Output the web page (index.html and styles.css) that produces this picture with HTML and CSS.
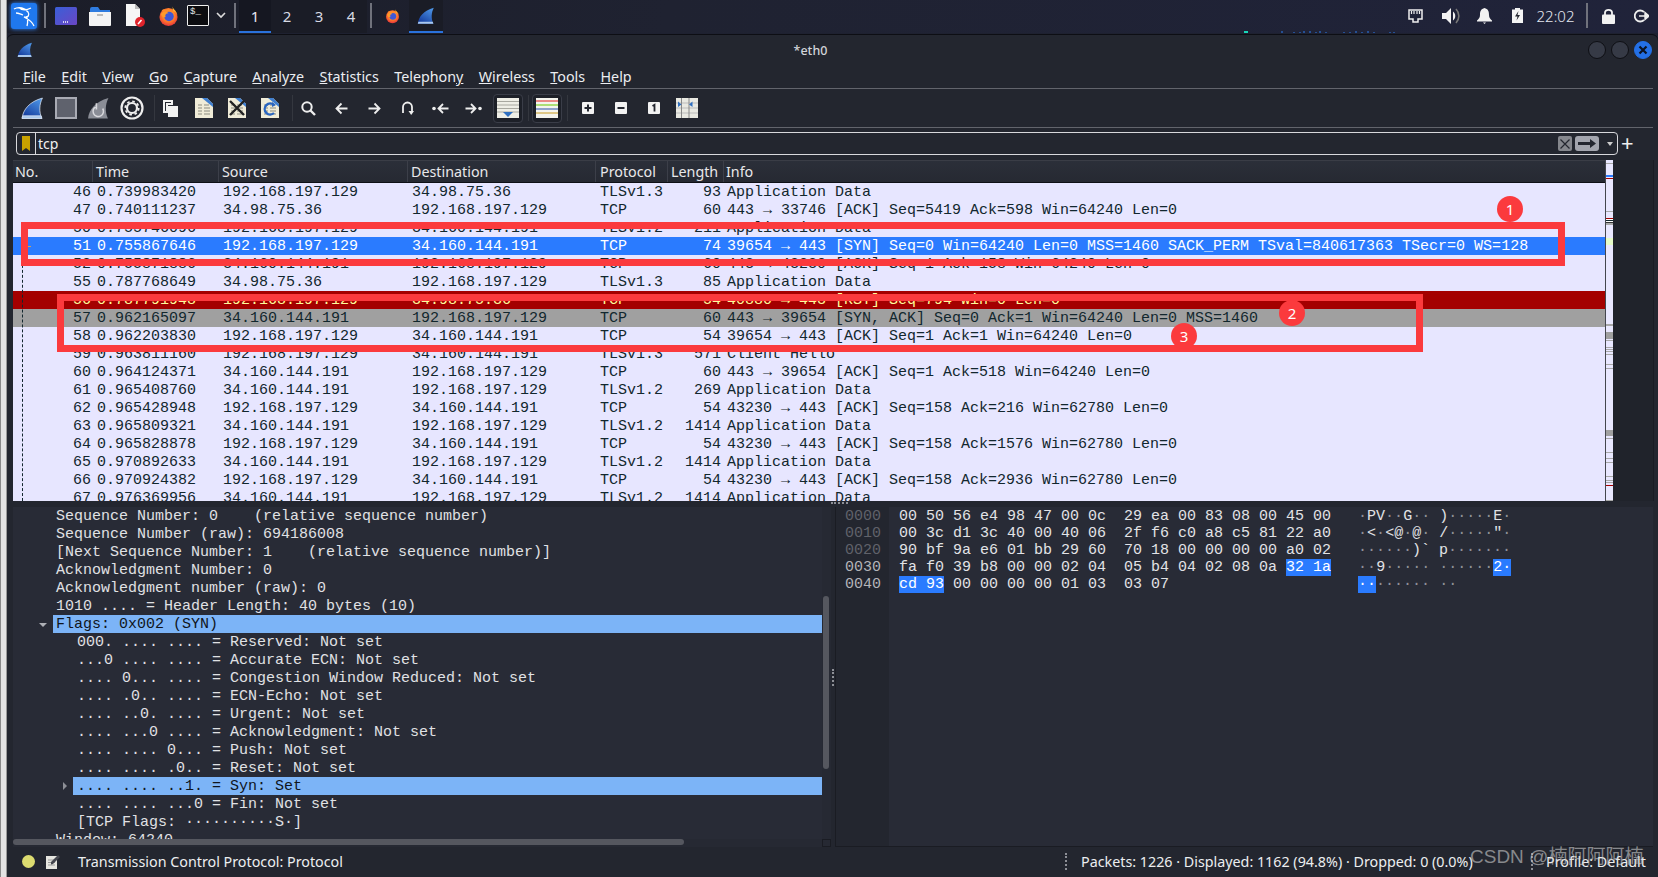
FILE: index.html
```html
<!DOCTYPE html>
<html lang="en">
<head>
<meta charset="utf-8">
<title>eth0 - Wireshark</title>
<link rel="stylesheet" href="styles.css">
</head>
<body>
<svg class="defs" width="0" height="0" aria-hidden="true">
  <defs>
    <linearGradient id="finGrad" x1="0.8" y1="0" x2="0.2" y2="1"><stop offset="0" stop-color="#4d95e6"/><stop offset="1" stop-color="#12389a"/></linearGradient>
    <radialGradient id="foxGrad" cx="0.5" cy="0.4" r="0.65"><stop offset="0" stop-color="#ffcf3d"/><stop offset="0.55" stop-color="#ff7a2a"/><stop offset="1" stop-color="#e0263f"/></radialGradient>
    <linearGradient id="launchGrad" x1="0" y1="0" x2="1" y2="1"><stop offset="0" stop-color="#3a5fd8"/><stop offset="1" stop-color="#6a46c4"/></linearGradient>
    <symbol id="fin" viewBox="0 0 22 22"><path d="M1 20.5C2 12 8 4.500 20.500 1C17.500 7 17 14 20 20.500Z" fill="url(#finGrad)"/><path d="M1 20.500C1.200 19.500 1.400 18.800 1.700 18H19.300L20 20.500Z" fill="#a9c8ee"/></symbol>
    <symbol id="fox" viewBox="0 0 22 22"><circle cx="11" cy="12" r="9.500" fill="url(#foxGrad)"/><path d="M4 5C6 3 8 4 9 6C11 4 14 5 15 7L8 10Z" fill="#ff8a2a"/><path d="M15 1C16 4 20 6 20.500 11C20 8 18 6.500 16 6Z" fill="#ffb52e"/><circle cx="11.500" cy="11.500" r="5" fill="#3f57d6"/><path d="M3 9C5 6 9 6 11 8C8 8 7 10 8 12C6 13 4 12 3 9Z" fill="#ff9a2a"/></symbol>
    <symbol id="page" viewBox="0 0 20 22"><path d="M1 1H13L19 7V21H1Z" fill="#f0ecd8"/><path d="M8 1H13L19 7V10Z" fill="#3f7fd0"/><path d="M4 8H8M10 8H15M4 11H8M10 11H16M4 14H8M10 14H16M4 17H8M10 17H16" stroke="#8b8b80" stroke-width="1.200"/></symbol>
  </defs>
</svg>
<div class="screen">
  <div class="edge"></div>
  <div class="main">
    <header class="panel">
      <div class="slot s34 kali"><svg width="26" height="26" viewBox="0 0 26 26"><rect width="26" height="26" rx="3" fill="#1f78ee"/><path d="M3 6C8 3 14 5 17 9C19 12 17 15 13 14C17 16 21 18 23 23M8 4.500C11 7.500 15 7.500 20 5M15 13.500C17 15.500 17 19 16 23M12 12C9 11 7 10 5 10" stroke="#fff" stroke-width="1.300" fill="none"/></svg></div>
      <div class="slot s8"><i class="vsep"></i></div>
      <div class="slot s34"><svg width="22" height="18" viewBox="0 0 22 18"><rect width="22" height="18" rx="1.500" fill="url(#launchGrad)"/><path d="M8 15H14" stroke="#fff" stroke-dasharray="1 1" stroke-width="1.500"/></svg></div>
      <div class="slot s34"><svg width="22" height="20" viewBox="0 0 22 20"><path d="M1 3Q1 1 3 1H9L11 4H21V8H1Z" fill="#2f7ce0"/><path d="M0 6H22V19Q22 20 21 20H1Q0 20 0 19Z" fill="#f4f4f4"/><path d="M8 9H14" stroke="#aaa" stroke-width="1.500"/></svg></div>
      <div class="slot s35"><svg width="20" height="23" viewBox="0 0 20 23"><path d="M1 0H10L15 5V22H1Z" fill="#f6f6f6"/><path d="M10 0L15 5H10Z" fill="#bbb"/><circle cx="15" cy="18" r="5" fill="#e0242c"/><path d="M13 20L16.500 16" stroke="#fff" stroke-width="1.500"/></svg></div>
      <div class="slot s32"><svg width="21" height="22"><use href="#fox"/></svg></div>
      <div class="slot s28"><span class="term">$_</span></div>
      <div class="slot s18"><svg width="10" height="7" viewBox="0 0 10 7"><path d="M1 1L5 5L9 1" stroke="#ddd" stroke-width="1.600" fill="none"/></svg></div>
      <div class="slot s9"><i class="vsep"></i></div>
      <div class="ws ws-on">1</div><div class="ws">2</div><div class="ws">3</div><div class="ws">4</div>
      <div class="slot s8"><i class="vsep"></i></div>
      <div class="slot s34"><svg width="15" height="16"><use href="#fox"/></svg></div>
      <div class="slot s34 task-on"><svg width="18" height="18"><use href="#fin"/></svg></div>
      <svg class="specks" width="152" height="3" viewBox="0 0 152 3"><rect width="4" height="2" y="1" fill="#18d6b8"/><path d="M38 1V3M50 2V3M56 2V3M60 1V3M66 1V3M72 2V3M76 1V3M82 2V3M100 2V3M106 2V3M112 1V3M118 2V3M124 1V3M130 2V3M146 2V3M150 2V3" stroke="#2b7cf0"/></svg>
      <div class="slot s35"><svg width="15" height="14" viewBox="0 0 15 14"><path d="M1 1H14V10H10V13H5V10H1Z" fill="none" stroke="#eee" stroke-width="1.500"/><path d="M3.500 2V5M6 2V5M9 2V5M11.500 2V5" stroke="#eee" stroke-width="1.200"/></svg></div>
      <div class="slot s35"><svg width="18" height="16" viewBox="0 0 18 16"><path d="M0 5H4L9 0V16L4 11H0Z" fill="#f2f2f2"/><path d="M11 3.500C14 6 14 10 11 12.500V3.500Z" fill="#f2f2f2"/><path d="M14 1C17.800 5 17.800 11 14 15" fill="none" stroke="#777" stroke-width="1.600"/></svg></div>
      <div class="slot s33"><svg width="15" height="16" viewBox="0 0 15 16"><path d="M7.500 0C11 1 12 3 12 7C12 10 13.500 11 15 12.500V13.500H0V12.500C1.500 11 3 10 3 7C3 3 4 1 7.500 0Z" fill="#f2f2f2"/><path d="M6 14.500H9L7.500 16Z" fill="#f2f2f2"/></svg></div>
      <div class="slot s32"><svg width="11" height="15" viewBox="0 0 11 15"><path d="M3 0H8V1.500H11V15H0V1.500H3Z" fill="#f4f4f4"/><path d="M6.500 3L3 8.500H5.500L4.500 12.500L8 7H5.500Z" fill="#23262f"/></svg></div>
      <div class="slot clock">22:02</div>
      <div class="slot s10"><i class="vsep"></i></div>
      <div class="slot s32"><svg width="13" height="16" viewBox="0 0 13 16"><path d="M3 7V4.500C3 1 10 1 10 4.500V7" fill="none" stroke="#f2f2f2" stroke-width="1.800"/><rect y="6.500" width="13" height="9.500" rx="1" fill="#f2f2f2"/></svg></div>
      <div class="slot s34 logout"><svg width="15" height="14" viewBox="0 0 15 14"><path d="M10 3A5.500 5.500 0 1 0 10 11" fill="none" stroke="#eee" stroke-width="1.800"/><path d="M5 7H11M11 3.500V10.500L15 7Z" stroke="#eee" fill="#eee" stroke-width="1.400"/></svg></div>
    </header>

    <div class="window">
      <div class="titlebar">
        <svg class="title-icon" width="16" height="16"><use href="#fin"/></svg>
        <div class="title">*eth0</div>
        <div class="winbtns"><i class="winbtn"></i><i class="winbtn"></i><i class="winbtn win-close"><svg width="10" height="10" viewBox="0 0 10 10"><path d="M1.500 1.500L8.500 8.500M8.500 1.500L1.500 8.500" stroke="#0c1322" stroke-width="2.200"/></svg></i></div>
      </div>
      <nav class="menubar">
        <span><u>F</u>ile</span><span><u>E</u>dit</span><span><u>V</u>iew</span><span><u>G</u>o</span><span><u>C</u>apture</span><span><u>A</u>nalyze</span><span><u>S</u>tatistics</span><span>Telephon<u>y</u></span><span><u>W</u>ireless</span><span><u>T</u>ools</span><span><u>H</u>elp</span>
      </nav>
      <div class="toolbar">
        <div class="tool t33"><svg class="fin-out" width="23" height="23"><use href="#fin"/></svg></div>
        <div class="tool t33"><svg width="22" height="22" viewBox="0 0 22 22"><rect x="1" y="1" width="20" height="20" fill="#5f626d" stroke="#a9abb4" stroke-width="2"/></svg></div>
        <div class="tool t33"><svg width="23" height="23" viewBox="0 0 22 22"><path d="M1 20.500C2 12 8 4.500 20.500 1C17.500 7 17 14 20 20.500Z" fill="#8a8d96"/><path d="M15 11A5 5 0 1 1 9 9M9 6V12" stroke="#d8d8dc" stroke-width="1.500" fill="none"/></svg></div>
        <div class="tool t33"><svg width="24" height="24" viewBox="0 0 24 24"><circle cx="12" cy="12" r="10.500" fill="none" stroke="#eee" stroke-width="2.200"/><circle cx="12" cy="12" r="5" fill="none" stroke="#eee" stroke-width="2.200"/><circle cx="12" cy="12" r="6.700" fill="none" stroke="#eee" stroke-width="1.800" stroke-dasharray="2.600 2.660"/></svg></div>
        <i class="tsep s-a"></i>
        <div class="tool t33"><svg width="15" height="17" viewBox="0 0 15 17"><path d="M1 1H9V4H4V12H1Z" fill="none" stroke="#f2f2f2" stroke-width="2"/><rect x="5" y="6" width="10" height="11" fill="#f2f2f2"/></svg></div>
        <div class="tool t33"><svg width="20" height="22"><use href="#page"/></svg></div>
        <div class="tool t33"><svg width="20" height="22" viewBox="0 0 20 22"><use href="#page" width="20" height="22"/><path d="M3 4L17 18M17 4L3 18" stroke="#222" stroke-width="2.400"/></svg></div>
        <div class="tool t33"><svg width="20" height="22" viewBox="0 0 20 22"><use href="#page" width="20" height="22"/><path d="M14 8A5.500 5.500 0 1 0 14 16" stroke="#2a66c0" stroke-width="2.400" fill="none"/><path d="M12 5L16 8L12 10Z" fill="#2a66c0"/></svg></div>
        <i class="tsep s-b"></i>
        <div class="tool t33"><svg width="15" height="15" viewBox="0 0 15 15"><circle cx="6" cy="6" r="4.700" fill="none" stroke="#eee" stroke-width="2"/><path d="M9.500 9.500L14 14" stroke="#eee" stroke-width="2.400"/></svg></div>
        <div class="tool t33"><svg width="13" height="13" viewBox="0 0 13 13"><path d="M12.500 6.500H2M6.500 1.500L1.500 6.500L6.500 11.500" fill="none" stroke="#eee" stroke-width="1.800"/></svg></div>
        <div class="tool t33"><svg width="13" height="13" viewBox="0 0 13 13"><path d="M.5 6.500H11M6.500 1.500L11.500 6.500L6.500 11.500" fill="none" stroke="#eee" stroke-width="1.800"/></svg></div>
        <div class="tool t33"><svg width="13" height="15" viewBox="0 0 13 15"><path d="M2 12V6A4.500 4.500 0 0 1 11 6V10" fill="none" stroke="#eee" stroke-width="1.800"/><path d="M7.500 10H13L10.200 14Z" fill="#eee"/></svg></div>
        <div class="tool t33"><svg width="17" height="13" viewBox="0 0 17 13"><circle cx="2" cy="6.500" r="1.800" fill="#eee"/><path d="M16.500 6.500H7M11 2L6.500 6.500L11 11" fill="none" stroke="#eee" stroke-width="1.800"/></svg></div>
        <div class="tool t33"><svg width="17" height="13" viewBox="0 0 17 13"><circle cx="15" cy="6.500" r="1.800" fill="#eee"/><path d="M.5 6.500H10M6 2L10.500 6.500L6 11" fill="none" stroke="#eee" stroke-width="1.800"/></svg></div>
        <div class="tool boxed first-box"><svg width="22" height="20" viewBox="0 0 22 20"><rect width="22" height="20" fill="#eeeee6"/><path d="M0 3.500H22M0 7H22M0 10.500H22M0 14H22" stroke="#a8a8a0"/><path d="M6 14H16L11 19Z" fill="#2f6fc0"/></svg></div>
        <i class="tsep s-c"></i>
        <div class="tool boxed"><svg width="22" height="20" viewBox="0 0 22 20"><rect width="22" height="20" fill="#f4f4ee"/><path d="M0 3H22" stroke="#e02020"/><path d="M0 7H22" stroke="#66c800"/><path d="M0 11H22" stroke="#2a4fa8"/><path d="M0 15H22" stroke="#c89a20"/></svg></div>
        <i class="tsep s-d"></i>
        <div class="tool t33 zoom-a"><svg width="12" height="12" viewBox="0 0 12 12"><rect width="12" height="12" rx="1" fill="#f2f2f2"/><path d="M2.500 6H9.500M6 2.500V9.500" stroke="#23262f" stroke-width="2"/></svg></div>
        <div class="tool t33"><svg width="12" height="12" viewBox="0 0 12 12"><rect width="12" height="12" rx="1" fill="#f2f2f2"/><path d="M2.500 6H9.500" stroke="#23262f" stroke-width="2"/></svg></div>
        <div class="tool t33"><svg width="12" height="12" viewBox="0 0 12 12"><rect width="12" height="12" rx="1" fill="#f2f2f2"/><path d="M4.500 4L6.500 2.800V9.500" fill="none" stroke="#23262f" stroke-width="1.800"/></svg></div>
        <div class="tool t33"><svg width="22" height="20" viewBox="0 0 22 20"><rect width="22" height="20" fill="#e9e9e2"/><path d="M0 5H22M0 10H22M0 15H22" stroke="#bbb"/><path d="M5.500 0V20M13 0V20" stroke="#888"/><path d="M2 3.500L5.500 6.500L2 9ZM16.500 3.500L13 6.500L16.500 9Z" fill="#2f6fc0"/></svg></div>
      </div>

      <div class="filter">
        <div class="bookmark"><svg width="8" height="15" viewBox="0 0 8 15"><path d="M0 0H8V15L4 12L0 15Z" fill="#c8a100"/></svg></div>
        <div class="filter-text">tcp</div>
        <div class="clear-btn"><svg width="10" height="10" viewBox="0 0 10 10"><path d="M.5 .5L9.500 9.500M9.500 .5L.5 9.500" stroke="#23262f" stroke-width="1.200"/></svg></div>
        <div class="apply-btn"><svg width="18" height="9" viewBox="0 0 18 9"><path d="M0 3H12V0L18 4.500L12 9V6H0Z" fill="#23262f"/></svg></div>
        <i class="drop"></i>
      </div>
      <div class="filter-plus">+</div>

      <section class="packets">
        <div class="plist">
          <div class="row head"><div>No.</div><div>Time</div><div>Source</div><div>Destination</div><div>Protocol</div><div>Length</div><div>Info</div></div>
          <div class="rows">
            <div class="row"><div>46</div><div>0.739983420</div><div>192.168.197.129</div><div>34.98.75.36</div><div>TLSv1.3</div><div>93</div><div>Application Data</div></div>
            <div class="row"><div>47</div><div>0.740111237</div><div>34.98.75.36</div><div>192.168.197.129</div><div>TCP</div><div>60</div><div>443 → 33746 [ACK] Seq=5419 Ack=598 Win=64240 Len=0</div></div>
            <div class="row"><div>50</div><div>0.755746096</div><div>192.168.197.129</div><div>34.160.144.191</div><div>TLSv1.2</div><div>211</div><div>Application Data</div></div>
            <div class="row sel"><div>51</div><div>0.755867646</div><div>192.168.197.129</div><div>34.160.144.191</div><div>TCP</div><div>74</div><div>39654 → 443 [SYN] Seq=0 Win=64240 Len=0 MSS=1460 SACK_PERM TSval=840617363 TSecr=0 WS=128</div></div>
            <div class="row"><div>52</div><div>0.755871886</div><div>34.160.144.191</div><div>192.168.197.129</div><div>TCP</div><div>60</div><div>443 → 43230 [ACK] Seq=1 Ack=158 Win=64240 Len=0</div></div>
            <div class="row"><div>55</div><div>0.787768649</div><div>34.98.75.36</div><div>192.168.197.129</div><div>TLSv1.3</div><div>85</div><div>Application Data</div></div>
            <div class="row rst"><div>56</div><div>0.787791948</div><div>192.168.197.129</div><div>34.98.75.36</div><div>TCP</div><div>54</div><div>40880 → 443 [RST] Seq=794 Win=0 Len=0</div></div>
            <div class="row syn"><div>57</div><div>0.962165097</div><div>34.160.144.191</div><div>192.168.197.129</div><div>TCP</div><div>60</div><div>443 → 39654 [SYN, ACK] Seq=0 Ack=1 Win=64240 Len=0 MSS=1460</div></div>
            <div class="row"><div>58</div><div>0.962203830</div><div>192.168.197.129</div><div>34.160.144.191</div><div>TCP</div><div>54</div><div>39654 → 443 [ACK] Seq=1 Ack=1 Win=64240 Len=0</div></div>
            <div class="row"><div>59</div><div>0.963811160</div><div>192.168.197.129</div><div>34.160.144.191</div><div>TLSv1.3</div><div>571</div><div>Client Hello</div></div>
            <div class="row"><div>60</div><div>0.964124371</div><div>34.160.144.191</div><div>192.168.197.129</div><div>TCP</div><div>60</div><div>443 → 39654 [ACK] Seq=1 Ack=518 Win=64240 Len=0</div></div>
            <div class="row"><div>61</div><div>0.965408760</div><div>34.160.144.191</div><div>192.168.197.129</div><div>TLSv1.2</div><div>269</div><div>Application Data</div></div>
            <div class="row"><div>62</div><div>0.965428948</div><div>192.168.197.129</div><div>34.160.144.191</div><div>TCP</div><div>54</div><div>43230 → 443 [ACK] Seq=158 Ack=216 Win=62780 Len=0</div></div>
            <div class="row"><div>63</div><div>0.965809321</div><div>34.160.144.191</div><div>192.168.197.129</div><div>TLSv1.2</div><div>1414</div><div>Application Data</div></div>
            <div class="row"><div>64</div><div>0.965828878</div><div>192.168.197.129</div><div>34.160.144.191</div><div>TCP</div><div>54</div><div>43230 → 443 [ACK] Seq=158 Ack=1576 Win=62780 Len=0</div></div>
            <div class="row"><div>65</div><div>0.970892633</div><div>34.160.144.191</div><div>192.168.197.129</div><div>TLSv1.2</div><div>1414</div><div>Application Data</div></div>
            <div class="row"><div>66</div><div>0.970924382</div><div>192.168.197.129</div><div>34.160.144.191</div><div>TCP</div><div>54</div><div>43230 → 443 [ACK] Seq=158 Ack=2936 Win=62780 Len=0</div></div>
            <div class="row"><div>67</div><div>0.976369956</div><div>34.160.144.191</div><div>192.168.197.129</div><div>TLSv1.2</div><div>1414</div><div>Application Data</div></div>
            <i class="rel-line"></i><i class="rel-tick"></i>
            <div class="mark mark-1"></div>
            <div class="mark mark-2"></div>
            <div class="badge badge-1">1</div>
            <div class="badge badge-2">2</div>
            <div class="badge badge-3">3</div>
          </div>
        </div>
        <div class="minimap"></div>
      </section>

      <div class="splitter"><i class="grip"></i></div>

      <section class="panes">
        <div class="details">
          <div class="tree">
            <div class="line"><i class="gut g1"></i><div class="txt p1">Sequence Number: 0    (relative sequence number)</div></div>
            <div class="line"><i class="gut g1"></i><div class="txt p1">Sequence Number (raw): 694186008</div></div>
            <div class="line"><i class="gut g1"></i><div class="txt p1">[Next Sequence Number: 1    (relative sequence number)]</div></div>
            <div class="line"><i class="gut g1"></i><div class="txt p1">Acknowledgment Number: 0</div></div>
            <div class="line"><i class="gut g1"></i><div class="txt p1">Acknowledgment number (raw): 0</div></div>
            <div class="line"><i class="gut g1"></i><div class="txt p1">1010 .... = Header Length: 40 bytes (10)</div></div>
            <div class="line"><i class="gut g1"><b class="tri-down"></b></i><div class="txt p1 hi">Flags: 0x002 (SYN)</div></div>
            <div class="line"><i class="gut g2"></i><div class="txt p2">000. .... .... = Reserved: Not set</div></div>
            <div class="line"><i class="gut g2"></i><div class="txt p2">...0 .... .... = Accurate ECN: Not set</div></div>
            <div class="line"><i class="gut g2"></i><div class="txt p2">.... 0... .... = Congestion Window Reduced: Not set</div></div>
            <div class="line"><i class="gut g2"></i><div class="txt p2">.... .0.. .... = ECN-Echo: Not set</div></div>
            <div class="line"><i class="gut g2"></i><div class="txt p2">.... ..0. .... = Urgent: Not set</div></div>
            <div class="line"><i class="gut g2"></i><div class="txt p2">.... ...0 .... = Acknowledgment: Not set</div></div>
            <div class="line"><i class="gut g2"></i><div class="txt p2">.... .... 0... = Push: Not set</div></div>
            <div class="line"><i class="gut g2"></i><div class="txt p2">.... .... .0.. = Reset: Not set</div></div>
            <div class="line"><i class="gut g2"><b class="tri-right"></b></i><div class="txt p2 hi">.... .... ..1. = Syn: Set</div></div>
            <div class="line"><i class="gut g2"></i><div class="txt p2">.... .... ...0 = Fin: Not set</div></div>
            <div class="line"><i class="gut g2"></i><div class="txt p2">[TCP Flags: ··········S·]</div></div>
            <div class="line"><i class="gut g1"></i><div class="txt p1">Window: 64240</div></div>
          </div>
          <div class="vbar"><i class="vthumb"></i></div>
          <div class="hbar"><i class="hthumb"></i></div>
          <i class="corner"></i>
        </div>
        <div class="vgrip"><i class="vgrip-dots"></i></div>
        <div class="bytes">
          <div class="offsets"><div class="off-dim">0000</div><div class="off-dim">0010</div><div class="off-dim">0020</div><div>0030</div><div>0040</div></div>
          <div class="hexdump"><div>00 50 56 e4 98 47 00 0c  29 ea 00 83 08 00 45 00   <span class="dt">·</span>PV<span class="dt">··</span>G<span class="dt">··</span> )<span class="dt">·····</span>E<span class="dt">·</span></div><div>00 3c d1 3c 40 00 40 06  2f f6 c0 a8 c5 81 22 a0   <span class="dt">·</span>&lt;<span class="dt">·</span>&lt;@<span class="dt">·</span>@<span class="dt">·</span> /<span class="dt">·····</span>"<span class="dt">·</span></div><div>90 bf 9a e6 01 bb 29 60  70 18 00 00 00 00 a0 02   <span class="dt">······</span>)` p<span class="dt">·······</span></div><div>fa f0 39 b8 00 00 02 04  05 b4 04 02 08 0a <span class="hx">32 1a</span>   <span class="dt">··</span>9<span class="dt">·····</span> <span class="dt">······</span><span class="hx">2·</span></div><div><span class="hx">cd 93</span> 00 00 00 00 01 03  03 07                     <span class="hx">··</span><span class="dt">······</span> <span class="dt">··</span></div></div>
        </div>
      </section>

      <footer class="status">
        <i class="led"></i>
        <svg class="note" width="14" height="15" viewBox="0 0 14 15"><path d="M0 2H11V15H0Z" fill="#e6e6e0"/><path d="M2 6H9M2 8.500H9M2 11H9" stroke="#999"/><path d="M5 8L12 1L14 3L7 10L5 10.500Z" fill="#44464e"/></svg>
        <div class="status-msg">Transmission Control Protocol: Protocol</div>
        <i class="sgrip"></i>
        <div class="status-stats">Packets: 1226 · Displayed: 1162 (94.8%) · Dropped: 0 (0.0%)</div>
        <i class="sgrip"></i>
        <div class="status-prof">Profile: Default</div>
        <div class="watermark">CSDN @楠阿阿阿楠</div>
      </footer>
    </div>
  </div>
</div>
</body>
</html>
```
FILE: styles.css
```css
* { box-sizing: border-box; }
html, body { margin: 0; padding: 0; }
body {
  width: 1658px;
  height: 877px;
  overflow: hidden;
  background: #1e2130;
  font-family: "Noto Sans", "Liberation Sans", sans-serif;
  color: #e6e6e6;
}
i, b { display: block; font-style: normal; }
.defs { position: absolute; }
.screen { display: flex; width: 1658px; height: 877px; }
.edge {
  width: 7px;
  flex: none;
  background: #e4e4e4;
  border-left: 1px solid #8a8a8a;
  border-right: 1px solid #9a9a9a;
}
.main { width: 1651px; display: flex; flex-direction: column; }

/* top panel */
.panel {
  height: 33px;
  flex: none;
  display: flex;
  align-items: stretch;
  background: linear-gradient(100deg, #1b1d28 0, #1f2231 40%, #20233a 100%);
  position: relative;
}
.slot { display: flex; align-items: center; justify-content: center; height: 31px; flex: none; }
.s8 { width: 8px; } .s9 { width: 9px; } .s10 { width: 10px; } .s18 { width: 18px; }
.s28 { width: 28px; } .s32 { width: 32px; } .s33 { width: 33px; } .s34 { width: 34px; } .s35 { width: 35px; }
.vsep { width: 2px; height: 25px; background: #70727c; }
.kali svg { filter: drop-shadow(0 0 2px #2f86ff); }
.term {
  width: 22px; height: 21px;
  background: #0c0c10;
  border: 1px solid #eee;
  border-radius: 1px;
  font: 9px/12px "Liberation Mono", monospace;
  color: #eee;
  padding-left: 2px;
}
.ws {
  width: 32px; height: 33px; flex: none;
  font-size: 15px; line-height: 32px; text-align: center;
  color: #d8dae4;
  background: #1a1c26;
}
.ws-on { background: #151721; border-bottom: 2px solid #2a72dc; color: #e6e8f0; }
.task-on { height: 33px; background: #1a1c26; border-bottom: 2px solid #2a72dc; }
.specks { margin: 30px 2px 0 auto; flex: none; }
.clock { width: 49px; padding-right: 4px; font-size: 15px; color: #e4e7f0; font-weight: 300; }

/* window */
.window {
  width: 1651px;
  height: 842px;
  margin-top: 2px;
  background: #23262f;
  border-radius: 6px 6px 0 0;
  padding: 0 5px 0 6px;
  display: flex;
  flex-direction: column;
  position: relative;
  box-shadow: 0 -1px 0 #0d0e14;
}
.titlebar { height: 30px; flex: none; display: flex; align-items: center; margin-left: -1px; padding-left: 6px; }
.title-icon { flex: none; margin-left: -1px; }
.title { flex: 1; text-align: center; font-size: 12.500px; font-weight: 500; color: #d2d4da; }
.winbtns { display: flex; gap: 5px; margin-right: 1px; }
.winbtn { width: 18px; height: 18px; border-radius: 50%; background: #363a46; border: 1px solid #0e0f14; display: flex; align-items: center; justify-content: center; }
.win-close { background: #2470e6; border-color: #2470e6; }

.menubar {
  height: 24px; flex: none;
  display: flex; gap: 15.400px;
  padding-left: 10px;
  font-size: 14.300px; line-height: 24px; color: #eceef2;
  border-bottom: 1px solid #62646c;
}
.toolbar {
  height: 39px; flex: none;
  display: flex; align-items: center;
  padding-left: 3px;
  border-bottom: 1px solid #62646c;
}
.tool { display: flex; align-items: center; justify-content: center; height: 30px; flex: none; }
.t33 { width: 33px; }
.fin-out { stroke: #dfe8f4; stroke-width: .7px; }
.boxed { width: 30px; height: 29px; background: #1d2028; border: 1px solid #3a3d48; border-radius: 4px; }
.first-box { margin-left: 3px; }
.tsep { width: 1px; height: 26px; background: #34373f; flex: none; }
.s-a { margin: 0 0 0 6px; }
.s-b { margin: 0 0 0 6px; }
.s-c { margin: 0 3px 0 5px; }
.s-d { margin: 0 0 0 5px; }
.zoom-a { margin-left: 3px; }
.s-a + .tool { margin-left: -1px; }
.s-b + .tool { margin-left: -1px; }

/* filter */
.filter {
  height: 23px; flex: none;
  width: 1602px;
  margin: 4px 0 0 3px;
  display: flex; align-items: center;
  border: 1px solid #d8d8dc;
  border-radius: 4px;
}
.bookmark { width: 19px; height: 21px; border-right: 1px solid #d8d8dc; display: flex; align-items: center; justify-content: center; }
.filter-text { flex: 1; padding-left: 2px; font-size: 14px; line-height: 21px; color: #f0f0f0; }
.clear-btn { width: 14px; height: 15px; background: #85878d; border-radius: 2px; display: flex; align-items: center; justify-content: center; }
.apply-btn { width: 24px; height: 15px; margin-left: 3px; background: #a3a5ae; border-radius: 3px; display: flex; align-items: center; justify-content: center; }
.drop { width: 0; height: 0; margin: 0 4px 0 8px; border: 3.500px solid transparent; border-top: 4px solid #ccc; border-bottom: 0; }
.filter-plus {
  position: absolute;
  left: 1614px; top: 92px;
  font-size: 22px; line-height: 30px; color: #eee;
}

/* packet list */
.packets {
  height: 341px; flex: none;
  margin-top: 5px;
  display: flex;
  background: #20232b;
  box-shadow: 1px 0 0 #1a1c23;
}
.plist { width: 1592px; flex: none; }
.row {
  display: grid;
  grid-template-columns: 79px 126px 189px 188px 72px 56px 1fr;
  height: 18px;
  font: 15px/20px "Liberation Mono", monospace;
  color: #12272e;
  background: #e7e6ff;
  white-space: pre;
}
.row > div { padding-left: 5px; overflow: hidden; }
.row > div:first-child { text-align: right; padding: 0 1px 0 0; }
.row > div:nth-child(6) { text-align: right; padding: 0 2px 0 0; }
.row > div:nth-child(7) { padding-left: 4px; }
.head {
  height: 23px;
  font: 14.300px/22px "Noto Sans", sans-serif;
  color: #e8e8ea;
  background: linear-gradient(#2b2f39, #262932);
  border-top: 1px solid #3a3d46;
  border-bottom: 1px solid #0e1016;
}
.head > div { border-left: 1px solid #3c3f49; padding-left: 3px; }
.head > div:first-child { text-align: left; padding: 0 0 0 2px; border-left: 0; }
.head > div:nth-child(5) { padding-left: 4px; }
.head > div:nth-child(6) { text-align: left; padding: 0 0 0 3px; }
.head > div:nth-child(7) { padding-left: 2px; }
.sel { background: #2a7bff; color: #fff; }
.rst { background: #a40000; color: #fffc9c; }
.syn { background: #a0a0a0; }
.rows { height: 318px; overflow: hidden; position: relative; }
.rel-line { position: absolute; left: 9px; top: 72px; height: 246px; border-left: 1px dashed #12272e; }
.rel-tick { position: absolute; left: 15px; top: 63px; width: 3px; height: 1px; background: #c9a060; }
.mark { position: absolute; border: 7px solid #fb3a3d; }
.mark-1 { left: 8px; top: 39px; width: 1544px; height: 44px; }
.mark-2 { left: 44px; top: 111px; width: 1366px; height: 58px; }
.badge {
  position: absolute;
  width: 26px; height: 26px; border-radius: 50%;
  background: #fb3a3d; color: #fff;
  font: 15px/26px "Noto Sans", sans-serif;
  text-align: center;
}
.badge-1 { left: 1484px; top: 13px; }
.badge-2 { left: 1266px; top: 117px; }
.badge-3 { left: 1158px; top: 140px; }
.minimap {
  width: 8px; flex: none;
  border-left: 1px solid #44464e;
  background: linear-gradient(#e9e8ff 0 3px, #a8a8a8 3px 4px, #e9e8ff 4px 15px, #2a7bff 15px 17px, #e9e8ff 17px 18px, #a40000 18px 19px, #e9e8ff 19px 51px, #a8a8a8 51px 52px, #e9e8ff 52px 58px, #a40000 58px 59px, #fff 59px 60px, #12272e 60px 61px, #fff 61px 62px, #333 62px 63px, #a8a8a8 63px 65px, #e9e8ff 65px 78px, #e6fcc8 78px 85px, #e9e8ff 85px 164px, #a8a8a8 164px 166px, #e9e8ff 166px 172px, #a0a0a0 172px 179px, #e9e8ff 179px 180px, #a8a8a8 180px 181px, #e9e8ff 181px 187px, #a8a8a8 187px 188px, #e9e8ff 188px 189px, #a8a8a8 189px 190px, #e9e8ff 190px 191px, #a8a8a8 191px 192px, #e9e8ff 192px 194px, #a8a8a8 194px 195px, #e9e8ff 195px 204px, #a8a8a8 204px 205px, #e9e8ff 205px 208px, #a8a8a8 208px 209px, #e9e8ff 209px 270px, #a0a0a0 270px 276px, #e9e8ff 276px 278px, #a8a8a8 278px 279px, #e9e8ff 279px 292px, #a8a8a8 292px 293px, #e9e8ff 293px 298px, #a8a8a8 298px 299px, #e9e8ff 299px 302px, #a8a8a8 302px 303px, #e9e8ff 303px 316px, #a8a8a8 316px 317px, #e9e8ff 317px 320px, #a8a8a8 320px 321px, #e9e8ff 321px 322px, #a8a8a8 322px 323px, #e9e8ff 323px 325px, #a40000 325px 326px, #e9e8ff 326px 340px, #a8a8a8 340px 341px);
}

/* splitters */
.splitter { height: 6px; flex: none; display: flex; justify-content: center; padding-top: 1px; }
.grip { width: 17px; height: 2px; margin-left: 13px; border-top: 2px dotted #8d8f96; }

/* lower panes */
.panes { height: 340px; flex: none; display: flex; }
.details {
  width: 818px; flex: none;
  display: grid;
  grid-template-columns: 809px 9px;
  grid-template-rows: 332px 8px;
  background: #282b36;
  border-right: 1px solid #1a1c23;
  border-bottom: 1px solid #1a1c23;
}
.tree { overflow: hidden; font: 15px/20px "Liberation Mono", monospace; color: #e0e1e4; }
.line { display: flex; height: 18px; }
.gut { flex: none; display: flex; align-items: center; justify-content: flex-end; padding-right: 6px; }
.g1 { width: 40px; }
.g2 { width: 60px; }
.txt { flex: 1; white-space: pre; overflow: hidden; }
.p1 { padding-left: 3px; }
.p2 { padding-left: 4px; }
.hi { background: #7cb4f7; color: #10151c; }
.tri-down { width: 0; height: 0; border: 4px solid transparent; border-top: 4px solid #aeb0b6; border-bottom: 0; margin-top: 2px; }
.tri-right { width: 0; height: 0; border: 4px solid transparent; border-left: 4px solid #8d8f96; border-right: 0; }
.vbar { padding: 89px 2px 0 1px; background: #262933; }
.vthumb { width: 6px; height: 173px; border-radius: 3px; background: #55575f; }
.hbar { background: #262933; }
.hthumb { width: 671px; height: 6px; border-radius: 3px; background: #55575f; }
.corner { border: 1px solid #1a1c23; background: #262933; }
.vgrip { width: 4px; flex: none; display: flex; align-items: center; justify-content: center; }
.vgrip-dots { width: 2px; height: 17px; border-left: 2px dotted #8d8f96; }
.bytes {
  width: 818px; flex: none;
  display: flex;
  font: 15px/17px "Liberation Mono", monospace;
  white-space: pre;
  border-left: 1px solid #1a1c23;
  border-bottom: 1px solid #1a1c23;
  background: #282b36;
}
.offsets { width: 53px; flex: none; padding: 1px 0 0 9px; background: #23262f; color: #b4b5b9; }
.off-dim { color: #60626a; }
.hexdump { flex: 1; padding: 1px 0 0 10px; color: #e2e3e6; }
.dt { color: #8f9198; }
.hx { background: #2a7bff; color: #fff; }

/* status bar */
.status {
  height: 29px; flex: none;
  display: flex; align-items: center;
  font-size: 14.300px; color: #eceef0;
  position: relative;
}
.led { width: 13px; height: 13px; margin-left: 9px; border-radius: 50%; background: #dcdc70; flex: none; }
.note { margin-left: 11px; flex: none; }
.status-msg { margin-left: 18px; width: 987px; flex: none; white-space: nowrap; }
.sgrip { width: 2px; height: 17px; border-left: 2px dotted #8d8f96; flex: none; }
.status-stats { margin-left: 14px; width: 450px; flex: none; white-space: nowrap; }
.status-prof { margin-left: 13px; white-space: nowrap; }
.watermark {
  position: absolute;
  left: 1457px; top: 0;
  font: 19px/20px "Liberation Sans", "Noto Sans CJK SC", sans-serif;
  color: rgba(205, 205, 205, .6);
  white-space: nowrap;
}
```
